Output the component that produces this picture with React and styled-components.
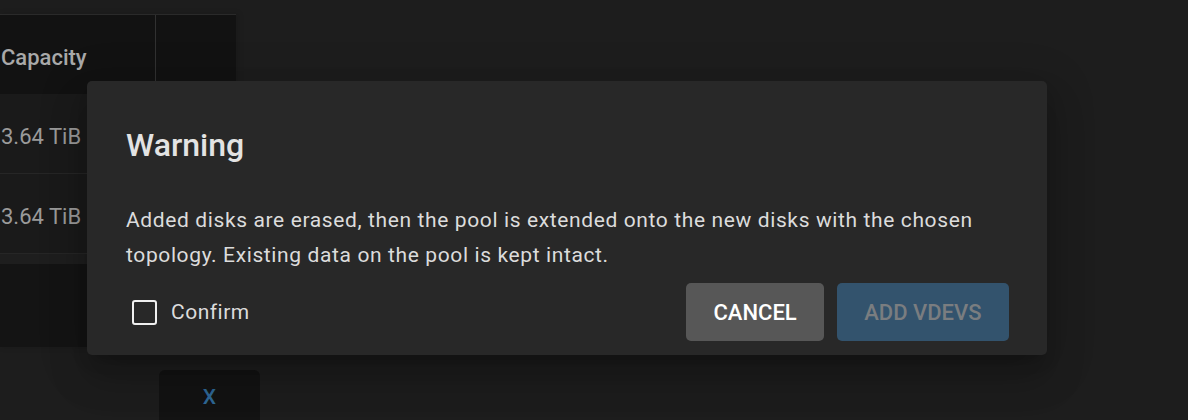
import React from 'react'
import styled, { createGlobalStyle } from 'styled-components'

const GlobalStyle = createGlobalStyle`
  body {
    margin: 0;
    background: #1d1d1d;
    font-family: Roboto, 'Liberation Sans', sans-serif;
  }
`

const Page = styled.div`
  position: relative;
  width: 1188px;
  height: 420px;
  overflow: hidden;
  padding-top: 14px;
  box-sizing: border-box;
`

const Table = styled.div`
  width: 236px;
  border-top: 1px solid #2a2a2a;
  box-shadow: 2px 0 6px rgba(0, 0, 0, 0.15);
`

const Row = styled.div`
  display: grid;
  grid-template-columns: 155px 1px 80px;
  height: ${p => p.$height}px;
  background: ${p => p.$bg};
  border-bottom: ${p => (p.$line ? '1px solid #262626' : 'none')};
  box-sizing: border-box;
`

const Cell = styled.div`
  display: flex;
  align-items: center;
  padding: 5px 0 0 1px;
  font-size: 22px;
  font-weight: ${p => (p.$head ? 500 : 400)};
  color: ${p => (p.$head ? '#a9a9a9' : '#9b9b9b')};
`

const Divider = styled.div`
  background: ${p => (p.$show ? '#313131' : 'transparent')};
`

const Band = styled.div`
  height: ${p => p.$height}px;
  background: ${p => p.$bg};
`

const XButton = styled.div`
  width: 101px;
  height: 60px;
  margin: 23px 0 0 159px;
  background: #131313;
  border-radius: 6px;
  display: flex;
  align-items: center;
  justify-content: center;
  color: #2e6795;
  font-size: 21px;
  font-weight: 500;
  padding-bottom: 6px;
  box-sizing: border-box;
`

const Dialog = styled.div`
  position: absolute;
  left: 87px;
  top: 81px;
  width: 960px;
  height: 274px;
  box-sizing: border-box;
  padding: 45px 38px 14px 39px;
  background: #282828;
  border-radius: 5px;
  box-shadow: 0 11px 15px -7px rgba(0, 0, 0, 0.2), 0 24px 38px 3px rgba(0, 0, 0, 0.14),
    0 9px 46px 8px rgba(0, 0, 0, 0.12);
  display: flex;
  flex-direction: column;
`

const Title = styled.h2`
  margin: 0;
  font-size: 32px;
  line-height: 1.2;
  font-weight: 500;
  color: #e3e3e3;
`

const Message = styled.p`
  margin: 39px 0 0;
  font-size: 21px;
  letter-spacing: 0.62px;
  line-height: 35px;
  color: #dcdcdc;
`

const Actions = styled.div`
  margin-top: 10px;
  display: flex;
  align-items: center;
  justify-content: space-between;
`

const CheckLabel = styled.label`
  display: flex;
  align-items: center;
  gap: 14px;
  margin-left: 6px;
  font-size: 21px;
  letter-spacing: 0.5px;
  color: #dcdcdc;
`

const Box = styled.span`
  width: 25px;
  height: 25px;
  box-sizing: border-box;
  border: 2.5px solid #f0f0f0;
  border-radius: 3px;
`

const Buttons = styled.div`
  display: flex;
  gap: 13px;
`

const Button = styled.button`
  height: 58px;
  padding: 0 ${p => p.$pad}px;
  border: none;
  border-radius: 5px;
  font-family: Roboto, 'Liberation Sans', sans-serif;
  font-size: 22px;
  font-weight: 500;
  background: ${p => (p.$primary ? '#33536d' : '#575757')};
  color: ${p => (p.$primary ? '#7a7d80' : '#ffffff')};
`

export default function App() {
  return (
    <Page>
      <GlobalStyle />
      <Table>
        <Row $height={79} $bg="#121212">
          <Cell $head>Capacity</Cell>
          <Divider $show />
          <Cell />
        </Row>
        <Row $height={80} $bg="#1a1a1a" $line>
          <Cell>3.64 TiB</Cell>
          <Divider />
          <Cell />
        </Row>
        <Row $height={80} $bg="#1a1a1a" $line>
          <Cell>3.64 TiB</Cell>
          <Divider />
          <Cell />
        </Row>
        <Band $height={10} $bg="#1e1e1e" />
        <Band $height={83} $bg="#141414" />
      </Table>
      <XButton>X</XButton>

      <Dialog>
        <Title>Warning</Title>
        <Message>
          Added disks are erased, then the pool is extended onto the new disks with the chosen topology.
          Existing data on the pool is kept intact.
        </Message>
        <Actions>
          <CheckLabel>
            <Box />
            Confirm
          </CheckLabel>
          <Buttons>
            <Button $pad={27}>CANCEL</Button>
            <Button $pad={27.5} $primary disabled>ADD VDEVS</Button>
          </Buttons>
        </Actions>
      </Dialog>
    </Page>
  )
}
